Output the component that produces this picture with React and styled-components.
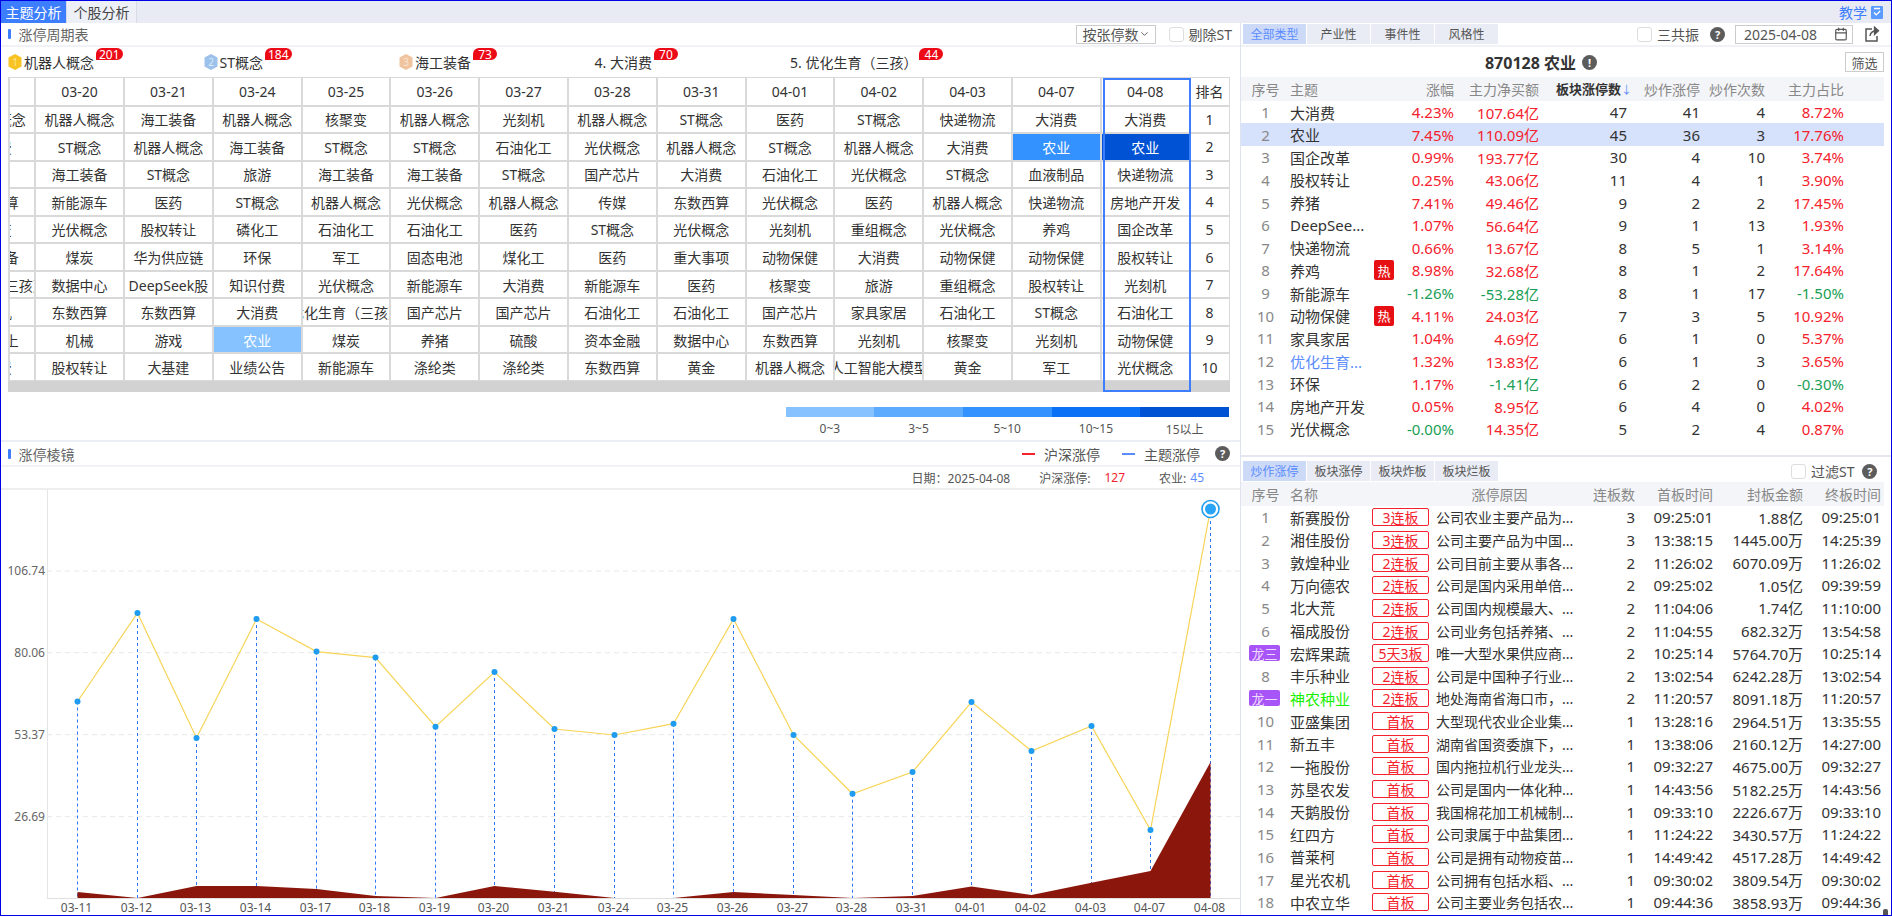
import React from 'react';
import styled, { createGlobalStyle } from 'styled-components';
import { Calendar, ChevronDown } from 'lucide-react';

const GlobalStyle = createGlobalStyle`
  * { box-sizing: border-box; }
  html, body { margin: 0; padding: 0; background: #fff; }
  body {
    font-family: "Noto Sans", "Noto Sans CJK SC", sans-serif;
    font-size: 14px;
    color: #333;
  }
`;

const HEAT = { 1: '#85c2ff', 2: '#3392ff', 3: '#0052d4' };

const dates = ['03-20', '03-21', '03-24', '03-25', '03-26', '03-27', '03-28', '03-31', '04-01', '04-02', '04-03', '04-07', '04-08'];

const cycleRows = [
  ['机器人概念', '机器人概念', '海工装备', '机器人概念', '核聚变', '机器人概念', '光刻机', '机器人概念', 'ST概念', '医药', 'ST概念', '快递物流', '大消费', '大消费'],
  ['大消费', 'ST概念', '机器人概念', '海工装备', 'ST概念', 'ST概念', '石油化工', '光伏概念', '机器人概念', 'ST概念', '机器人概念', '大消费', '农业', '农业'],
  ['', '海工装备', 'ST概念', '旅游', '海工装备', '海工装备', 'ST概念', '国产芯片', '大消费', '石油化工', '光伏概念', 'ST概念', '血液制品', '快递物流'],
  ['东数西算', '新能源车', '医药', 'ST概念', '机器人概念', '光伏概念', '机器人概念', '传媒', '东数西算', '光伏概念', '医药', '机器人概念', '快递物流', '房地产开发'],
  ['核聚变', '光伏概念', '股权转让', '磷化工', '石油化工', '石油化工', '医药', 'ST概念', '光伏概念', '光刻机', '重组概念', '光伏概念', '养鸡', '国企改革'],
  ['海工装备', '煤炭', '华为供应链', '环保', '军工', '固态电池', '煤化工', '医药', '重大事项', '动物保健', '大消费', '动物保健', '动物保健', '股权转让'],
  ['优化生育（三孩）', '数据中心', 'DeepSeek股', '知识付费', '光伏概念', '新能源车', '大消费', '新能源车', '医药', '核聚变', '旅游', '重组概念', '股权转让', '光刻机'],
  ['光刻机', '东数西算', '东数西算', '大消费', '优化生育（三孩）', '国产芯片', '国产芯片', '石油化工', '石油化工', '国产芯片', '家具家居', '石油化工', 'ST概念', '石油化工'],
  ['业绩向上', '机械', '游戏', '农业', '煤炭', '养猪', '硫酸', '资本金融', '数据中心', '东数西算', '光刻机', '核聚变', '光刻机', '动物保健'],
  ['大消费', '股权转让', '大基建', '业绩公告', '新能源车', '涤纶类', '涤纶类', '东数西算', '黄金', '机器人概念', '人工智能大模型', '黄金', '军工', '光伏概念'],
];

const legend = [
  ['0~3', '#85c2ff'],
  ['3~5', '#5cabff'],
  ['5~10', '#3392ff'],
  ['10~15', '#0a70f5'],
  ['15以上', '#0052d4'],
];

const topFive = [
  { medal: 1, name: '机器人概念', count: 201 },
  { medal: 2, name: 'ST概念', count: 184 },
  { medal: 3, name: '海工装备', count: 73 },
  { name: '4. 大消费', count: 70 },
  { name: '5. 优化生育（三孩）', count: 44 },
];

const MEDAL_COLORS = { 1: ['#f7c325', '#ffe58a'], 2: ['#9cc1ea', '#dcebfb'], 3: ['#eec39e', '#fbe6d3'] };

const themes = [
  ['大消费', '4.23%', '107.64亿', 47, 41, 4, '8.72%'],
  ['农业', '7.45%', '110.09亿', 45, 36, 3, '17.76%'],
  ['国企改革', '0.99%', '193.77亿', 30, 4, 10, '3.74%'],
  ['股权转让', '0.25%', '43.06亿', 11, 4, 1, '3.90%'],
  ['养猪', '7.41%', '49.46亿', 9, 2, 2, '17.45%'],
  ['DeepSee...', '1.07%', '56.64亿', 9, 1, 13, '1.93%'],
  ['快递物流', '0.66%', '13.67亿', 8, 5, 1, '3.14%'],
  ['养鸡', '8.98%', '32.68亿', 8, 1, 2, '17.64%', 'hot'],
  ['新能源车', '-1.26%', '-53.28亿', 8, 1, 17, '-1.50%'],
  ['动物保健', '4.11%', '24.03亿', 7, 3, 5, '10.92%', 'hot'],
  ['家具家居', '1.04%', '4.69亿', 6, 1, 0, '5.37%'],
  ['优化生育...', '1.32%', '13.83亿', 6, 1, 3, '3.65%', 'link'],
  ['环保', '1.17%', '-1.41亿', 6, 2, 0, '-0.30%'],
  ['房地产开发', '0.05%', '8.95亿', 6, 4, 0, '4.02%'],
  ['光伏概念', '-0.00%', '14.35亿', 5, 2, 4, '0.87%'],
];

const stocks = [
  ['新赛股份', '3连板', '公司农业主要产品为...', 3, '09:25:01', '1.88亿', '09:25:01'],
  ['湘佳股份', '3连板', '公司主要产品为中国...', 3, '13:38:15', '1445.00万', '14:25:39'],
  ['敦煌种业', '2连板', '公司目前主要从事各...', 2, '11:26:02', '6070.09万', '11:26:02'],
  ['万向德农', '2连板', '公司是国内采用单倍...', 2, '09:25:02', '1.05亿', '09:39:59'],
  ['北大荒', '2连板', '公司国内规模最大、...', 2, '11:04:06', '1.74亿', '11:10:00'],
  ['福成股份', '2连板', '公司业务包括养猪、...', 2, '11:04:55', '682.32万', '13:54:58'],
  ['宏辉果蔬', '5天3板', '唯一大型水果供应商...', 2, '10:25:14', '5764.70万', '10:25:14', '龙三'],
  ['丰乐种业', '2连板', '公司是中国种子行业...', 2, '13:02:54', '6242.28万', '13:02:54'],
  ['神农种业', '2连板', '地处海南省海口市，...', 2, '11:20:57', '8091.18万', '11:20:57', '龙一'],
  ['亚盛集团', '首板', '大型现代农业企业集...', 1, '13:28:16', '2964.51万', '13:35:55'],
  ['新五丰', '首板', '湖南省国资委旗下，...', 1, '13:38:06', '2160.12万', '14:27:00'],
  ['一拖股份', '首板', '国内拖拉机行业龙头...', 1, '09:32:27', '4675.00万', '09:32:27'],
  ['苏垦农发', '首板', '公司是国内一体化种...', 1, '14:43:56', '5182.25万', '14:43:56'],
  ['天鹅股份', '首板', '我国棉花加工机械制...', 1, '09:33:10', '2226.67万', '09:33:10'],
  ['红四方', '首板', '公司隶属于中盐集团...', 1, '11:24:22', '3430.57万', '11:24:22'],
  ['普莱柯', '首板', '公司是拥有动物疫苗...', 1, '14:49:42', '4517.28万', '14:49:42'],
  ['星光农机', '首板', '公司拥有包括水稻、...', 1, '09:30:02', '3809.54万', '09:30:02'],
  ['中农立华', '首板', '公司主要业务包括农...', 1, '09:44:36', '3858.93万', '09:44:36'],
];

// chart data, already in page pixels
const chartDates = ['03-11', '03-12', '03-13', '03-14', '03-17', '03-18', '03-19', '03-20', '03-21', '03-24', '03-25', '03-26', '03-27', '03-28', '03-31', '04-01', '04-02', '04-03', '04-07', '04-08'];
const lineY = [701.5, 613, 738, 619, 651.6, 657.6, 726.7, 672, 729, 735, 723.7, 619, 735, 793.7, 772, 702, 751, 726, 830, 509];
const areaY = [892, 898, 886, 886, 889, 896, 898, 886, 891.7, 898, 898, 892, 895, 898, 896, 886.5, 895, 882.7, 871, 762];
const AXIS_Y = 898;
const xAt = i => Math.round(77 + i * 59.63) + 0.5;
const gridLines = [
  [571, '106.74'],
  [652.7, '80.06'],
  [734.7, '53.37'],
  [816.7, '26.69'],
];

const Page = styled.div`
  position: relative;
  width: 1892px;
  height: 916px;
  border: 1px solid #0000e6;
  display: flex;
  flex-direction: column;
  overflow: hidden;
  background: #fff;
`;

const TabBar = styled.div`
  height: 22px;
  flex: none;
  display: flex;
  background: #e8ebf4;
`;

const PageTab = styled.div`
  width: ${p => (p.$active ? 66 : 70)}px;
  display: flex;
  align-items: center;
  justify-content: center;
  color: ${p => (p.$active ? '#fff' : '#444')};
  background: ${p => (p.$active ? '#3d7eff' : '#eef0f7')};
  border-right: 1px solid #d8dce8;
`;

const TeachLink = styled.div`
  margin-left: auto;
  padding-right: 8px;
  display: flex;
  align-items: center;
  gap: 4px;
  color: #3d7eff;
`;

const Main = styled.div`
  flex: 1;
  min-height: 0;
  display: flex;
`;

const LeftPane = styled.div`
  width: 1240px;
  flex: none;
  border-right: 1px solid #dfe3ee;
  display: flex;
  flex-direction: column;
`;

const CycleSection = styled.section`
  height: 419px;
  flex: none;
  border-bottom: 2px solid #eceef5;
`;

const SectionHead = styled.div`
  height: 24px;
  display: flex;
  align-items: center;
  padding: 0 8px 0 7px;
  border-bottom: 2px solid #f0f2f7;
`;

const SectionTitle = styled.div`
  display: flex;
  align-items: center;
  color: #666;
  &::before {
    content: '';
    width: 2.5px;
    height: 10px;
    margin-right: 8px;
    border-radius: 1px;
    background: #3d7eff;
  }
`;

const SortSelect = styled.div`
  margin-left: auto;
  width: 80px;
  height: 19px;
  padding: 0 5px 0 6px;
  display: flex;
  align-items: center;
  justify-content: space-between;
  white-space: nowrap;
  border: 1px solid #ccc;
  color: #555;
`;

const CheckLabel = styled.label`
  display: flex;
  align-items: center;
  gap: 5px;
  white-space: nowrap;
  color: #555;
  margin-left: ${p => p.$offset || 0}px;
`;

const CheckBox = styled.span`
  width: 15px;
  height: 15px;
  background: #fff;
  border: 1px solid #ddd;
  border-radius: 3px;
`;

const TopFiveRow = styled.div`
  height: 30px;
  padding-left: 7px;
  display: grid;
  grid-template-columns: repeat(5, 195.5px);
  align-items: center;
`;

const TopItem = styled.div`
  position: relative;
  display: flex;
  align-items: center;
  gap: 2px;
  white-space: nowrap;
  color: #333;
`;

const CountBadge = styled.span`
  position: relative;
  top: -8px;
  height: 12px;
  padding: 0 3px;
  min-width: 24px;
  display: flex;
  align-items: center;
  justify-content: center;
  font-size: 12px;
  color: #fff;
  background: #ec0a17;
  border-radius: 7px 7px 7px 1px;
`;

const CycleWrap = styled.div`
  position: relative;
  margin-left: 7px;
  width: 1222px;
`;

const CycleGrid = styled.div`
  display: grid;
  grid-template-columns: 24.2px repeat(13, 86.8px) 38px;
  grid-template-rows: 26.5px repeat(10, 25.55px);
  gap: 2px;
  padding: 1px 1px 1px 2px;
  background: #d9d9d9;
`;

const Cell = styled.div`
  display: flex;
  align-items: center;
  justify-content: center;
  overflow: hidden;
  white-space: nowrap;
  color: ${p => (p.$bg ? '#fff' : '#333')};
  background: ${p => p.$bg || '#fff'};
`;

const ClippedText = styled.span`
  flex: none;
  width: 86.8px;
  margin-left: -62.6px;
  display: flex;
  justify-content: center;
  overflow: hidden;
`;

const ScrollTrack = styled.div`
  height: 11px;
  background: #d2d2d2;
`;

const ColumnMark = styled.div`
  position: absolute;
  left: 1095px;
  top: 1px;
  bottom: 0;
  width: 88px;
  border: 2px solid #3d7eff;
  pointer-events: none;
`;

const HeatLegend = styled.div`
  margin: 15px 11px 0 auto;
  width: 443.5px;
  display: grid;
  grid-template-columns: repeat(5, 1fr);
`;

const HeatStep = styled.div`
  font-size: 12px;
  text-align: center;
  color: #555;
  &::before {
    content: '';
    display: block;
    height: 10px;
    margin-bottom: 3px;
    background: ${p => p.$color};
  }
`;

const PrismSection = styled.section`
  flex: 1;
  min-height: 0;
  display: flex;
  flex-direction: column;
`;

const PrismHead = styled(SectionHead)`
  height: 25px;
  flex: none;
  padding-right: 10px;
`;

const LegendItem = styled.div`
  display: flex;
  align-items: center;
  gap: 9px;
  margin-left: ${p => p.$offset};
  color: #555;
  &::before {
    content: '';
    width: 13px;
    height: 2px;
    background: ${p => p.$color};
  }
`;

const HelpDot = styled.span`
  width: 15px;
  height: 15px;
  margin-left: ${p => p.$offset || 0}px;
  flex: none;
  display: inline-flex;
  align-items: center;
  justify-content: center;
  border-radius: 50%;
  font-size: 11px;
  font-weight: 700;
  line-height: 1;
  color: #fff;
  background: #5c5c5c;
`;

const InfoRow = styled.div`
  height: 23px;
  flex: none;
  padding-right: 36px;
  display: flex;
  align-items: center;
  justify-content: flex-end;
  font-size: 12px;
  color: #555;
  border-bottom: 2px solid #eee;
`;

const InfoValue = styled.span`
  margin: 0 ${p => p.$after || 0}px 0 ${p => p.$before || 0}px;
  color: ${p => p.$color || 'inherit'};
`;

const ChartSvg = styled.svg`
  display: block;
  width: 1239px;
  height: 425px;
  flex: none;
`;

const RightPane = styled.div`
  flex: 1;
  min-width: 0;
  display: flex;
  flex-direction: column;
`;

const ThemePanel = styled.section`
  height: 434px;
  flex: none;
  border-bottom: 2px solid #e4e7f2;
`;

const PanelBar = styled.div`
  display: flex;
  align-items: center;
  height: ${p => p.$height}px;
  padding: ${p => p.$top || 0}px 0 0 2px;
  border-bottom: ${p => (p.$line ? '2px solid #f0f2f7' : 'none')};
`;

const TypeTabs = styled.div`
  display: flex;
  gap: 1px;
`;

const TypeTab = styled.div`
  width: 63px;
  height: 19.5px;
  display: flex;
  align-items: center;
  justify-content: center;
  font-size: 12px;
  color: ${p => (p.$active ? '#5b8cff' : '#555')};
  background: ${p => (p.$active ? '#ccdaf8' : '#e9ecf4')};
`;

const DateBox = styled.div`
  width: 118px;
  height: 19px;
  margin-left: 10px;
  padding: 0 4px 0 8px;
  display: flex;
  align-items: center;
  justify-content: space-between;
  border: 1px solid #ccc;
  color: #555;
`;

const ShareSlot = styled.span`
  margin-left: 12px;
  display: flex;
`;

const TitleRow = styled.div`
  height: 30px;
  display: flex;
  align-items: center;
`;

const PanelTitle = styled.div`
  width: 600px;
  display: flex;
  align-items: center;
  justify-content: center;
  gap: 6px;
  font-size: 16px;
  font-weight: 700;
  color: #333;
`;

const FilterButton = styled.div`
  width: 39px;
  height: 20px;
  margin-left: 4px;
  display: flex;
  align-items: center;
  justify-content: center;
  font-size: 13px;
  color: #555;
  border: 1px solid #ccc;
`;

const ThemeRow = styled.div`
  width: 643px;
  height: ${p => (p.$head ? 23.7 : 22.65)}px;
  display: grid;
  grid-template-columns: 49px 84px 20px 60px 85px 88px 73px 65px 79px;
  align-items: center;
  white-space: nowrap;
  font-size: ${p => (p.$head ? 14 : 15)}px;
  color: ${p => (p.$head ? '#888' : '#333')};
  background: ${p => (p.$head ? '#f4f5f8' : p.$selected ? '#d6e1fb' : 'transparent')};
`;

const StockRow = styled.div`
  width: 643px;
  height: ${p => (p.$head ? 24 : 22.65)}px;
  display: grid;
  grid-template-columns: 49px 82px 57px 147px 59px 78px 90px 78px;
  align-items: center;
  white-space: nowrap;
  font-size: ${p => (p.$head ? 14 : 15)}px;
  color: ${p => (p.$head ? '#888' : '#333')};
  background: ${p => (p.$head ? '#f4f5f8' : 'transparent')};
`;

const SeqCol = styled.div`
  display: flex;
  justify-content: center;
  color: #888;
  font-size: ${p => (p.$head ? 14 : 15)}px;
`;

const NameCol = styled.div`
  color: ${p => p.$color || 'inherit'};
`;

const NumCol = styled.div`
  text-align: right;
  color: ${p => p.$color || 'inherit'};
`;

const SortHead = styled(NumCol)`
  font-size: 13px;
  font-weight: 600;
  color: #333;
`;

const SortArrow = styled.span`
  display: inline-block;
  width: 6px;
  font-weight: 400;
  font-size: 11px;
  color: #5b8cff;
`;

const HeadCenter = styled.div`
  text-align: center;
  padding-right: 6px;
`;

const HotTag = styled.span`
  width: 20px;
  height: 20px;
  display: flex;
  align-items: center;
  justify-content: center;
  font-size: 13px;
  color: #fff;
  background: #e60f14;
  border-radius: 2px;
`;

const BoardTag = styled.div`
  height: 18px;
  display: flex;
  align-items: center;
  justify-content: center;
  font-size: 14px;
  color: #f5222d;
  border: 1px solid #f5222d;
  border-radius: 2px;
`;

const ReasonCol = styled.div`
  padding-left: 7px;
  font-size: 14px;
  overflow: hidden;
  color: #333;
`;

const DragonTag = styled.span`
  width: 31px;
  height: 16px;
  margin-left: 8px;
  display: flex;
  align-items: center;
  justify-content: center;
  font-size: 13px;
  color: #f0dcff;
  background: #a855f7;
  border-radius: 2px;
`;

const ScrollThumb = styled.div`
  position: absolute;
  right: 3px;
  bottom: 0;
  width: 5px;
  height: 6px;
  border-radius: 2px 2px 0 0;
  background: #555;
`;

const Medal = ({ rank }) => {
  const [fill, tone] = MEDAL_COLORS[rank];
  return (
    <svg width="14" height="16" viewBox="0 0 14 16">
      <polygon points="7,0 13.5,3.5 13.5,12.5 7,16 0.5,12.5 0.5,3.5" fill={fill} />
      <text x="7" y="12" fontSize="10" textAnchor="middle" fill={tone}>{rank}</text>
    </svg>
  );
};

const TeachIcon = () => (
  <svg width="12" height="13" viewBox="0 0 12 13">
    <rect x="0" y="0" width="12" height="13" rx="1" fill="#5b9bff" />
    <path d="M3 2.5h6M3 6.5l2.2 2.4L9.2 5" stroke="#fff" strokeWidth="1.3" fill="none" />
  </svg>
);

const ShareIcon = () => (
  <svg width="15" height="16" viewBox="0 0 15 16" fill="none" stroke="#555" strokeWidth="1.5">
    <path d="M7 3H1v12h11v-5" />
    <path d="M5 10c.4-3.4 3-5.2 7-5.2" />
    <path d="M9.6 1.4L13.4 4.8 9.6 8.2z" fill="#555" />
  </svg>
);

const PrismChart = () => {
  const linePoints = lineY.map((y, i) => `${xAt(i)},${y}`).join(' ');
  const areaPoints = `${xAt(0)},${AXIS_Y} ${areaY.map((y, i) => `${xAt(i)},${y}`).join(' ')} ${xAt(19)},${AXIS_Y}`;
  return (
    <ChartSvg viewBox="1 490 1239 425">
      {gridLines.map(([y, label]) => (
        <g key={label}>
          <line x1="47" x2="1240" y1={y} y2={y} stroke="#e8e8e8" strokeWidth="1" strokeDasharray="5 4" />
          <text x="45" y={y + 4} fontSize="12" textAnchor="end" fill="#666">{label}</text>
        </g>
      ))}
      <line x1="47.5" x2="47.5" y1="490" y2={AXIS_Y} stroke="#e5e5e5" />
      {lineY.map((y, i) => (
        <line key={i} x1={xAt(i)} x2={xAt(i)} y1={y} y2={AXIS_Y} stroke="#2f74ff" strokeWidth="1" strokeDasharray="3 3" />
      ))}
      <polygon points={areaPoints} fill="#8b170c" />
      <line x1="47" x2="1240" y1={AXIS_Y + 0.5} y2={AXIS_Y + 0.5} stroke="#e0e0e0" />
      <polyline points={linePoints} fill="none" stroke="#f7d455" strokeWidth="1.2" />
      {lineY.slice(0, -1).map((y, i) => (
        <circle key={i} cx={xAt(i)} cy={y} r="3" fill="#1f9cf0" />
      ))}
      <circle cx={xAt(19)} cy={lineY[19]} r="8.5" fill="#fff" stroke="#1f9cf0" strokeWidth="1.6" />
      <circle cx={xAt(19)} cy={lineY[19]} r="5.5" fill="#2aa4f4" />
      {chartDates.map((d, i) => (
        <text key={d} x={xAt(i) - 1} y="912" fontSize="12" textAnchor="middle" fill="#555">{d}</text>
      ))}
    </ChartSvg>
  );
};

const signColor = v => (String(v).startsWith('-') ? '#1a9e56' : '#f5222d');

const nameColor = (kind, name) => {
  if (kind === 'link') return '#5b8cff';
  if (name === '神农种业') return '#19f000';
  return undefined;
};

const App = () => (
  <Page>
    <GlobalStyle />
    <TabBar>
      <PageTab $active>主题分析</PageTab>
      <PageTab>个股分析</PageTab>
      <TeachLink>教学<TeachIcon /></TeachLink>
    </TabBar>
    <Main>
      <LeftPane>
        <CycleSection>
          <SectionHead>
            <SectionTitle>涨停周期表</SectionTitle>
            <SortSelect>按张停数<ChevronDown size={12} color="#555" /></SortSelect>
            <CheckLabel $offset={13}><CheckBox />剔除ST</CheckLabel>
          </SectionHead>
          <TopFiveRow>
            {topFive.map(item => (
              <TopItem key={item.name}>
                {item.medal && <Medal rank={item.medal} />}
                {item.name}
                <CountBadge>{item.count}</CountBadge>
              </TopItem>
            ))}
          </TopFiveRow>
          <CycleWrap>
            <CycleGrid>
              <Cell />
              {dates.map(d => <Cell key={d}>{d}</Cell>)}
              <Cell>排名</Cell>
              {cycleRows.map((row, r) => (
                <React.Fragment key={r}>
                  {row.map((name, c) => {
                    if (c === 0) return <Cell key={c}><ClippedText>{name}</ClippedText></Cell>;
                    let bg;
                    if (name === '农业') bg = c === 13 ? HEAT[3] : c === 12 ? HEAT[2] : HEAT[1];
                    return <Cell key={c} $bg={bg}>{name}</Cell>;
                  })}
                  <Cell>{r + 1}</Cell>
                </React.Fragment>
              ))}
            </CycleGrid>
            <ScrollTrack />
            <ColumnMark />
          </CycleWrap>
          <HeatLegend>
            {legend.map(([label, color]) => (
              <HeatStep key={label} $color={color}>{label}</HeatStep>
            ))}
          </HeatLegend>
        </CycleSection>
        <PrismSection>
          <PrismHead>
            <SectionTitle>涨停棱镜</SectionTitle>
            <LegendItem $color="#f5222d" $offset="auto">沪深涨停</LegendItem>
            <LegendItem $color="#5b8cff" $offset="22px">主题涨停</LegendItem>
            <HelpDot $offset={15}>?</HelpDot>
          </PrismHead>
          <InfoRow>
            日期：2025-04-08
            <InfoValue $before={29} $after={14}>沪深涨停:</InfoValue>
            <InfoValue $color="#f5222d" $after={34}>127</InfoValue>
            农业:
            <InfoValue $color="#5b8cff" $before={4}>45</InfoValue>
          </InfoRow>
          <PrismChart />
        </PrismSection>
      </LeftPane>
      <RightPane>
        <ThemePanel>
          <PanelBar $height={24} $line>
            <TypeTabs>
              <TypeTab $active>全部类型</TypeTab>
              <TypeTab>产业性</TypeTab>
              <TypeTab>事件性</TypeTab>
              <TypeTab>风格性</TypeTab>
            </TypeTabs>
            <CheckLabel $offset={139}><CheckBox />三共振</CheckLabel>
            <HelpDot $offset={11}>?</HelpDot>
            <DateBox>2025-04-08<Calendar size={14} color="#555" /></DateBox>
            <ShareSlot><ShareIcon /></ShareSlot>
          </PanelBar>
          <TitleRow>
            <PanelTitle>870128 农业<HelpDot>!</HelpDot></PanelTitle>
            <FilterButton>筛选</FilterButton>
          </TitleRow>
          <ThemeRow $head>
            <SeqCol $head>序号</SeqCol>
            <NameCol>主题</NameCol>
            <span />
            <NumCol>涨幅</NumCol>
            <NumCol>主力净买额</NumCol>
            <SortHead>板块涨停数<SortArrow>↓</SortArrow></SortHead>
            <NumCol>炒作涨停</NumCol>
            <NumCol>炒作次数</NumCol>
            <NumCol>主力占比</NumCol>
          </ThemeRow>
          {themes.map((t, i) => (
            <ThemeRow key={t[0]} $selected={t[0] === '农业'}>
              <SeqCol>{i + 1}</SeqCol>
              <NameCol $color={nameColor(t[7], t[0])}>{t[0]}</NameCol>
              {t[7] === 'hot' ? <HotTag>热</HotTag> : <span />}
              <NumCol $color={signColor(t[1])}>{t[1]}</NumCol>
              <NumCol $color={signColor(t[2])}>{t[2]}</NumCol>
              <NumCol>{t[3]}</NumCol>
              <NumCol>{t[4]}</NumCol>
              <NumCol>{t[5]}</NumCol>
              <NumCol $color={signColor(t[6])}>{t[6]}</NumCol>
            </ThemeRow>
          ))}
        </ThemePanel>
        <PanelBar $height={25} $top={3}>
          <TypeTabs>
            <TypeTab $active>炒作涨停</TypeTab>
            <TypeTab>板块涨停</TypeTab>
            <TypeTab>板块炸板</TypeTab>
            <TypeTab>板块烂板</TypeTab>
          </TypeTabs>
          <CheckLabel $offset={293}><CheckBox />过滤ST</CheckLabel>
          <HelpDot $offset={8}>?</HelpDot>
        </PanelBar>
        <StockRow $head>
          <SeqCol $head>序号</SeqCol>
          <NameCol>名称</NameCol>
          <span />
          <HeadCenter>涨停原因</HeadCenter>
          <NumCol>连板数</NumCol>
          <NumCol>首板时间</NumCol>
          <NumCol>封板金额</NumCol>
          <NumCol>终板时间</NumCol>
        </StockRow>
        {stocks.map((s, i) => (
          <StockRow key={s[0]}>
            {s[7] ? <DragonTag>{s[7]}</DragonTag> : <SeqCol>{i + 1}</SeqCol>}
            <NameCol $color={nameColor(null, s[0])}>{s[0]}</NameCol>
            <BoardTag>{s[1]}</BoardTag>
            <ReasonCol>{s[2]}</ReasonCol>
            <NumCol>{s[3]}</NumCol>
            <NumCol>{s[4]}</NumCol>
            <NumCol>{s[5]}</NumCol>
            <NumCol>{s[6]}</NumCol>
          </StockRow>
        ))}
      </RightPane>
    </Main>
    <ScrollThumb />
  </Page>
);

export default App;
